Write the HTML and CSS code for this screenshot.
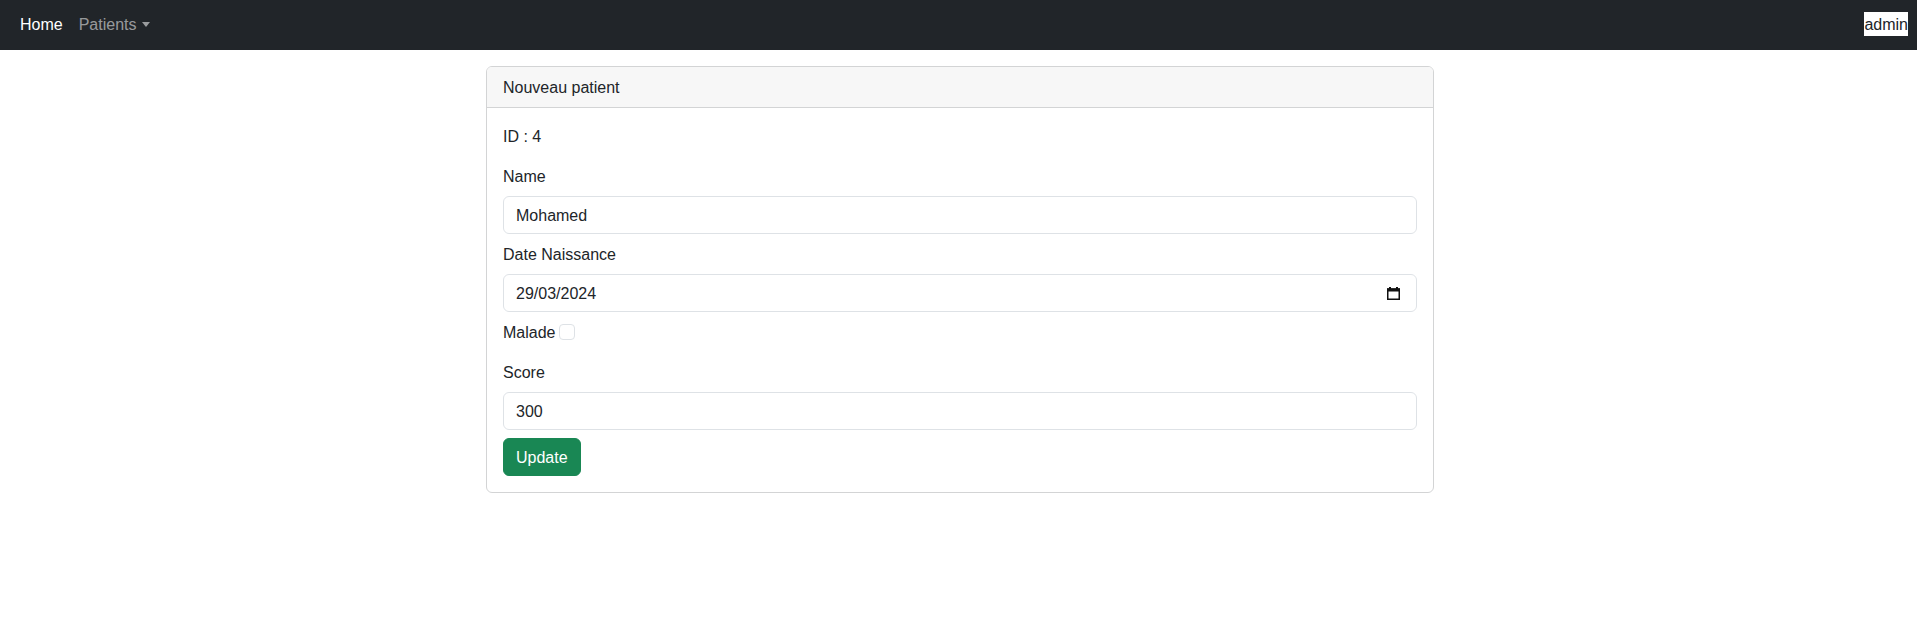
FILE: index.html
```html
<!DOCTYPE html>
<html lang="fr">
<head>
<meta charset="utf-8">
<title>Patient</title>
<link rel="stylesheet" href="styles.css">
</head>
<body>
<nav class="navbar">
  <ul class="nav-list">
    <li><a class="nav-link active" href="#">Home</a></li>
    <li><a class="nav-link dropdown-toggle" href="#">Patients<span class="caret"></span></a></li>
  </ul>
  <span class="user">admin</span>
</nav>
<main class="page">
  <section class="card">
    <div class="card-header">Nouveau patient</div>
    <div class="card-body">
      <div class="row-id">ID : 4</div>
      <div class="field">
        <label class="form-label">Name</label>
        <input class="form-control" type="text" value="Mohamed">
      </div>
      <div class="field">
        <label class="form-label">Date Naissance</label>
        <div class="form-control date-control">
          <span>29/03/2024</span>
          <svg class="cal" width="13" height="13" viewBox="0 0 13 13" aria-hidden="true">
            <rect x="2" y="0" width="2" height="2" fill="#111"/>
            <rect x="9" y="0" width="2" height="2" fill="#111"/>
            <rect x="0" y="1.5" width="13" height="3" fill="#111"/>
            <rect x="0.75" y="2" width="11.5" height="10.25" fill="none" stroke="#111" stroke-width="1.5"/>
          </svg>
        </div>
      </div>
      <div class="check-row">
        <label class="check-label">Malade</label>
        <span class="checkbox"></span>
      </div>
      <div class="field score">
        <label class="form-label">Score</label>
        <input class="form-control" type="text" value="300">
      </div>
      <button class="btn" type="button">Update</button>
    </div>
  </section>
</main>
</body>
</html>
```

FILE: styles.css
```css
* { box-sizing: border-box; }
body {
  margin: 0;
  font-family: "Liberation Sans", Arial, sans-serif;
  font-size: 16px;
  line-height: 24px;
  color: #212529;
  background: #fff;
}
.navbar {
  height: 50px;
  background: #212529;
  display: flex;
  align-items: center;
  justify-content: space-between;
  padding: 0 9px 2px 12px;
}
.nav-list {
  list-style: none;
  margin: 0;
  padding: 0;
  display: flex;
}
.nav-link {
  display: block;
  padding: 9px 8px 7px;
  color: rgba(255,255,255,0.55);
  text-decoration: none;
}
.nav-link.active { color: #fff; }
.caret {
  display: inline-block;
  margin-left: 5px;
  vertical-align: 3px;
  border-top: 5px solid rgba(255,255,255,0.55);
  border-left: 4.5px solid transparent;
  border-right: 4.5px solid transparent;
}
.user {
  background: #fff;
  color: #212529;
  line-height: 23px;
  padding-top: 1px;
}
.page {
  padding-top: 16px;
}
.card {
  width: 948px;
  margin: 0 auto 0 486px;
  border: 1px solid #d3d4d5;
  border-radius: 6px;
  overflow: hidden;
}
.card-header {
  background: #f7f7f7;
  padding: 9px 16px 7px;
  border-bottom: 1px solid #d3d4d5;
}
.card-body {
  padding: 16px;
}
.row-id { margin-bottom: 16px; padding-top: 1px; height: 24px; }
.field { margin-bottom: 8px; }
.form-label {
  display: block;
  height: 24px;
  padding-top: 1px;
  margin-bottom: 8px;
}
.form-control {
  display: block;
  width: 100%;
  height: 38px;
  padding: 7px 12px 5px;
  font: inherit;
  color: #212529;
  border: 1px solid #dee2e6;
  border-radius: 6px;
  background: #fff;
  outline: none;
}
.date-control {
  display: flex;
  align-items: center;
  justify-content: space-between;
  padding: 6px 16px 6px 12px;
}
.date-control span { padding-top: 2px; }
.cal { display: block; }
.check-row {
  display: flex;
  align-items: center;
  gap: 4px;
  height: 24px;
  margin-bottom: 16px;
}
.check-label { padding-top: 2px; }
.checkbox {
  width: 16px;
  height: 16px;
  border: 1px solid #dee2e6;
  border-radius: 4px;
  background: #fff;
}
.btn {
  font: inherit;
  color: #fff;
  background: #198754;
  border: 1px solid #198754;
  border-radius: 6px;
  padding: 7px 12px 5px;
  height: 38px;
}
```
